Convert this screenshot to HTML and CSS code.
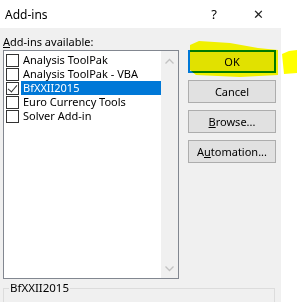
FILE: index.html
```
<!doctype html>
<html>
  <head>
    <title>Add-ins</title>
    <link rel="stylesheet" href="styles.css">
  </head>
  <body>
    <div class='window'>
      <div class='titlebar'>
        <span class='title'>Add-ins</span>
        <span class='help'>?</span>
        <span class='close'>&#x2715;</span>
      </div>
      <div class='dialog'>
        <div class='main'>
          <div class='left'>
            <div class='label'><u>A</u>dd-ins available:</div>
            <div class='listbox'>
              <div class='items'>
                <div class='item'><span class='check'></span><span class='name'>Analysis ToolPak</span></div>
                <div class='item'><span class='check'></span><span class='name'>Analysis ToolPak - VBA</span></div>
                <div class='item selected'><span class='check checked'></span><span class='name'>BfXXII2015</span></div>
                <div class='item'><span class='check'></span><span class='name'>Euro Currency Tools</span></div>
                <div class='item'><span class='check'></span><span class='name'>Solver Add-in</span></div>
              </div>
              <div class='scrollbar'>
                <svg width='17' height='17' viewBox='0 0 17 17'><path d='M4.5 10.5 L8.5 6.5 L12.5 10.5' fill='none' stroke='#c2c2c2' stroke-width='1.3'/></svg>
                <svg width='17' height='17' viewBox='0 0 17 17'><path d='M4.5 6.5 L8.5 10.5 L12.5 6.5' fill='none' stroke='#c2c2c2' stroke-width='1.3'/></svg>
              </div>
            </div>
          </div>
          <div class='buttons'>
            <button class='btn default'>OK</button>
            <button class='btn'>Cancel</button>
            <button class='btn'><u>B</u>rowse...</button>
            <button class='btn'>A<u>u</u>tomation...</button>
          </div>
        </div>
        <fieldset class='group'>
          <legend>BfXXII2015</legend>
        </fieldset>
      </div>
      <!-- yellow highlighter stroke over the OK button -->
      <svg class='marker' width='297' height='302' viewBox='0 0 297 302'>
        <path d='M190 45 L199 41 L230 43 L258 48 L278 50 L278 75 L240 77 L196 75 L190 70 Z' fill='#ffff00'/>
        <path d='M282 54 L289 51 L297 50 L297 73 L284 74 Z' fill='#ffff00'/>
      </svg>
    </div>
  </body>
</html>
```
FILE: styles.css
```
body {
  margin: 0;
  background: #fff;
  font-family: "Segoe UI", "Noto Sans", sans-serif;
  font-size: 11px;
  color: #000;
}

.window {
  position: relative;
  width: 297px;
  height: 302px;
  overflow: hidden;
}

.titlebar {
  height: 28px;
  display: flex;
  align-items: center;
  background: #fff;
}

.title {
  margin-left: 5px;
  flex: 1;
  font-size: 12px;
}

.help {
  width: 12px;
  margin-right: 31px;
  text-align: center;
  font-size: 13px;
}

.close {
  width: 14px;
  margin-right: 32px;
  text-align: center;
  font-size: 13px;
  color: #222;
}

.dialog {
  width: 281px;
  height: 274px;
  background: #f0f0f0;
  padding-left: 3px;
  box-sizing: border-box;
}

.main {
  display: flex;
}

.label {
  height: 22px;
  line-height: 16px;
  padding-top: 6px;
  box-sizing: border-box;
  font-size: 11px;
}

.listbox {
  width: 176px;
  height: 229px;
  border: 1px solid #828790;
  box-sizing: border-box;
  background: #fff;
  display: flex;
}

.items {
  flex: 1;
  padding-top: 2px;
  font-size: 11px;
}

.item {
  height: 14px;
  display: flex;
  align-items: center;
}

.check {
  width: 13px;
  height: 13px;
  margin-left: 2px;
  border: 1px solid #333;
  box-sizing: border-box;
  background: #fff;
  position: relative;
}

.check.checked::after {
  content: '';
  position: absolute;
  left: 3px;
  top: 0px;
  width: 4px;
  height: 8px;
  border-right: 1px solid #333;
  border-bottom: 1px solid #333;
  transform: rotate(40deg);
}

.name {
  margin-left: 2px;
  padding-left: 2px;
  height: 14px;
  line-height: 14px;
  flex: 1;
  white-space: nowrap;
}

.selected .name {
  background: #0078d7;
  color: #fff;
}

.scrollbar {
  width: 17px;
  background: #f0f0f0;
  display: flex;
  flex-direction: column;
  justify-content: space-between;
  padding: 2px 0 1px;
}

.buttons {
  display: flex;
  flex-direction: column;
  gap: 7px;
  margin-left: 9px;
  padding-top: 22px;
}

.btn {
  width: 88px;
  height: 23px;
  background: #e1e1e1;
  border: 1px solid #adadad;
  font-family: inherit;
  font-size: 11px;
  color: #000;
  padding: 0;
}

.btn.default {
  border: 2px solid #0078d7;
}

.group {
  margin: 2px 0 0;
  width: 272px;
  height: 40px;
  box-sizing: border-box;
  border: 1px solid #dcdcdc;
  padding: 0;
}

.group legend {
  margin-left: 5px;
  padding: 0 1px;
  line-height: 14px;
  font-size: 11.5px;
}

.marker {
  position: absolute;
  left: 0;
  top: 0;
  mix-blend-mode: multiply;
  pointer-events: none;
}
```
